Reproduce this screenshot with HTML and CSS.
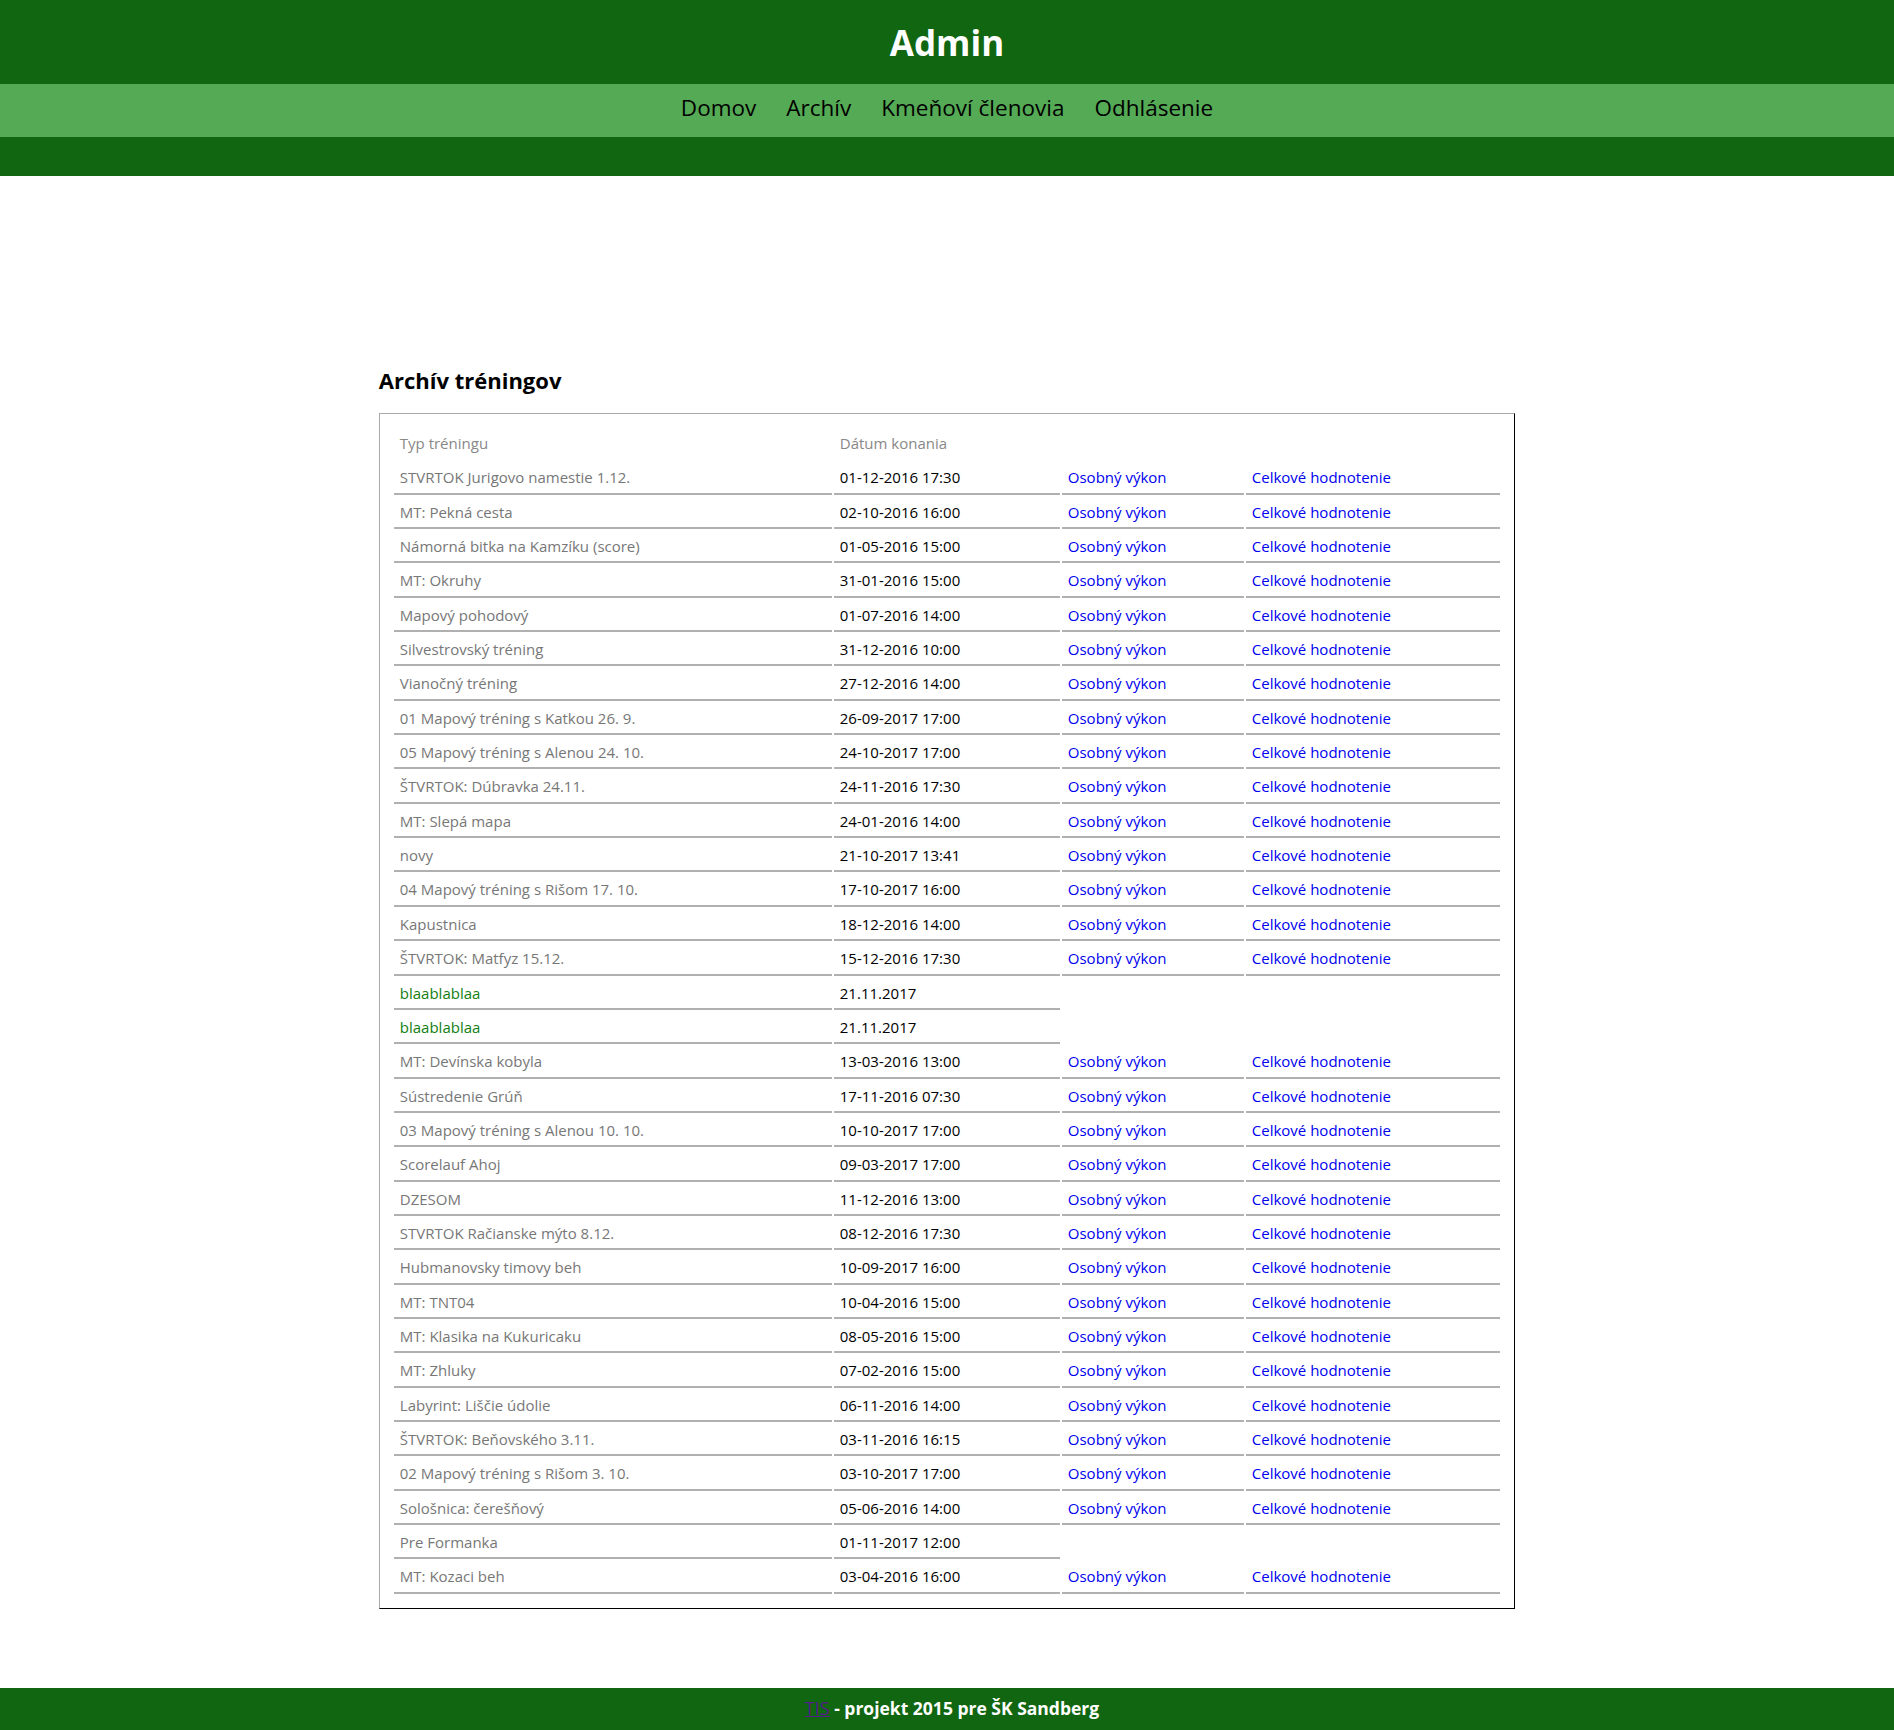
FILE: index.html
```html
<!DOCTYPE html>
<html lang="sk">
<head>
<meta charset="utf-8">
<title>Admin - Archív tréningov</title>
<link rel="stylesheet" href="styles.css">
</head>
<body>
<div class="page">
  <header class="site-header">
    <div class="title-bar"><h1 class="site-title">Admin</h1></div>
    <nav class="main-nav">
      <a class="nav-link" href="#">Domov</a>
      <a class="nav-link" href="#">Archív</a>
      <a class="nav-link" href="#">Kmeňoví členovia</a>
      <a class="nav-link" href="#">Odhlásenie</a>
    </nav>
    <div class="header-bottom"></div>
  </header>

  <main class="content">
    <h2 class="section-title">Archív tréningov</h2>
    <div class="archive-box">
      <table class="archive-table">
        <colgroup>
          <col class="col-type">
          <col class="col-date">
          <col class="col-personal">
          <col class="col-overall">
        </colgroup>
        <thead>
          <tr><th>Typ tréningu</th><th>Dátum konania</th><th></th><th></th></tr>
        </thead>
        <tbody>
          <tr><td class="type">STVRTOK Jurigovo namestie 1.12.</td><td class="date">01-12-2016 17:30</td><td><a href="#">Osobný výkon</a></td><td><a href="#">Celkové hodnotenie</a></td></tr>
          <tr><td class="type">MT: Pekná cesta</td><td class="date">02-10-2016 16:00</td><td><a href="#">Osobný výkon</a></td><td><a href="#">Celkové hodnotenie</a></td></tr>
          <tr><td class="type">Námorná bitka na Kamzíku (score)</td><td class="date">01-05-2016 15:00</td><td><a href="#">Osobný výkon</a></td><td><a href="#">Celkové hodnotenie</a></td></tr>
          <tr><td class="type">MT: Okruhy</td><td class="date">31-01-2016 15:00</td><td><a href="#">Osobný výkon</a></td><td><a href="#">Celkové hodnotenie</a></td></tr>
          <tr><td class="type">Mapový pohodový</td><td class="date">01-07-2016 14:00</td><td><a href="#">Osobný výkon</a></td><td><a href="#">Celkové hodnotenie</a></td></tr>
          <tr><td class="type">Silvestrovský tréning</td><td class="date">31-12-2016 10:00</td><td><a href="#">Osobný výkon</a></td><td><a href="#">Celkové hodnotenie</a></td></tr>
          <tr><td class="type">Vianočný tréning</td><td class="date">27-12-2016 14:00</td><td><a href="#">Osobný výkon</a></td><td><a href="#">Celkové hodnotenie</a></td></tr>
          <tr><td class="type">01 Mapový tréning s Katkou 26. 9.</td><td class="date">26-09-2017 17:00</td><td><a href="#">Osobný výkon</a></td><td><a href="#">Celkové hodnotenie</a></td></tr>
          <tr><td class="type">05 Mapový tréning s Alenou 24. 10.</td><td class="date">24-10-2017 17:00</td><td><a href="#">Osobný výkon</a></td><td><a href="#">Celkové hodnotenie</a></td></tr>
          <tr><td class="type">ŠTVRTOK: Dúbravka 24.11.</td><td class="date">24-11-2016 17:30</td><td><a href="#">Osobný výkon</a></td><td><a href="#">Celkové hodnotenie</a></td></tr>
          <tr><td class="type">MT: Slepá mapa</td><td class="date">24-01-2016 14:00</td><td><a href="#">Osobný výkon</a></td><td><a href="#">Celkové hodnotenie</a></td></tr>
          <tr><td class="type">novy</td><td class="date">21-10-2017 13:41</td><td><a href="#">Osobný výkon</a></td><td><a href="#">Celkové hodnotenie</a></td></tr>
          <tr><td class="type">04 Mapový tréning s Rišom 17. 10.</td><td class="date">17-10-2017 16:00</td><td><a href="#">Osobný výkon</a></td><td><a href="#">Celkové hodnotenie</a></td></tr>
          <tr><td class="type">Kapustnica</td><td class="date">18-12-2016 14:00</td><td><a href="#">Osobný výkon</a></td><td><a href="#">Celkové hodnotenie</a></td></tr>
          <tr><td class="type">ŠTVRTOK: Matfyz 15.12.</td><td class="date">15-12-2016 17:30</td><td><a href="#">Osobný výkon</a></td><td><a href="#">Celkové hodnotenie</a></td></tr>
          <tr><td class="type type-new">blaablablaa</td><td class="date">21.11.2017</td></tr>
          <tr><td class="type type-new">blaablablaa</td><td class="date">21.11.2017</td></tr>
          <tr><td class="type">MT: Devínska kobyla</td><td class="date">13-03-2016 13:00</td><td><a href="#">Osobný výkon</a></td><td><a href="#">Celkové hodnotenie</a></td></tr>
          <tr><td class="type">Sústredenie Grúň</td><td class="date">17-11-2016 07:30</td><td><a href="#">Osobný výkon</a></td><td><a href="#">Celkové hodnotenie</a></td></tr>
          <tr><td class="type">03 Mapový tréning s Alenou 10. 10.</td><td class="date">10-10-2017 17:00</td><td><a href="#">Osobný výkon</a></td><td><a href="#">Celkové hodnotenie</a></td></tr>
          <tr><td class="type">Scorelauf Ahoj</td><td class="date">09-03-2017 17:00</td><td><a href="#">Osobný výkon</a></td><td><a href="#">Celkové hodnotenie</a></td></tr>
          <tr><td class="type">DZESOM</td><td class="date">11-12-2016 13:00</td><td><a href="#">Osobný výkon</a></td><td><a href="#">Celkové hodnotenie</a></td></tr>
          <tr><td class="type">STVRTOK Račianske mýto 8.12.</td><td class="date">08-12-2016 17:30</td><td><a href="#">Osobný výkon</a></td><td><a href="#">Celkové hodnotenie</a></td></tr>
          <tr><td class="type">Hubmanovsky timovy beh</td><td class="date">10-09-2017 16:00</td><td><a href="#">Osobný výkon</a></td><td><a href="#">Celkové hodnotenie</a></td></tr>
          <tr><td class="type">MT: TNT04</td><td class="date">10-04-2016 15:00</td><td><a href="#">Osobný výkon</a></td><td><a href="#">Celkové hodnotenie</a></td></tr>
          <tr><td class="type">MT: Klasika na Kukuricaku</td><td class="date">08-05-2016 15:00</td><td><a href="#">Osobný výkon</a></td><td><a href="#">Celkové hodnotenie</a></td></tr>
          <tr><td class="type">MT: Zhluky</td><td class="date">07-02-2016 15:00</td><td><a href="#">Osobný výkon</a></td><td><a href="#">Celkové hodnotenie</a></td></tr>
          <tr><td class="type">Labyrint: Liščie údolie</td><td class="date">06-11-2016 14:00</td><td><a href="#">Osobný výkon</a></td><td><a href="#">Celkové hodnotenie</a></td></tr>
          <tr><td class="type">ŠTVRTOK: Beňovského 3.11.</td><td class="date">03-11-2016 16:15</td><td><a href="#">Osobný výkon</a></td><td><a href="#">Celkové hodnotenie</a></td></tr>
          <tr><td class="type">02 Mapový tréning s Rišom 3. 10.</td><td class="date">03-10-2017 17:00</td><td><a href="#">Osobný výkon</a></td><td><a href="#">Celkové hodnotenie</a></td></tr>
          <tr><td class="type">Sološnica: čerešňový</td><td class="date">05-06-2016 14:00</td><td><a href="#">Osobný výkon</a></td><td><a href="#">Celkové hodnotenie</a></td></tr>
          <tr><td class="type">Pre Formanka</td><td class="date">01-11-2017 12:00</td></tr>
          <tr><td class="type">MT: Kozaci beh</td><td class="date">03-04-2016 16:00</td><td><a href="#">Osobný výkon</a></td><td><a href="#">Celkové hodnotenie</a></td></tr>
        </tbody>
      </table>
    </div>
  </main>

  <footer class="site-footer">
    <p class="footer-text"><a class="footer-link" href="#">TIS</a> - projekt 2015 pre ŠK Sandberg</p>
  </footer>
</div>
</body>
</html>
```

FILE: styles.css
```css
html, body {
  margin: 0;
  padding: 0;
  background: #ffffff;
}

body {
  font-family: "Open Sans", "Noto Sans", sans-serif;
  font-size: 15px;
  color: #000;
}

.page {
  min-height: 1730px;
  display: flex;
  flex-direction: column;
}

/* Header */
.site-header {
  background: #116611;
}

.title-bar {
  height: 84px;
  display: flex;
  align-items: center;
  justify-content: center;
  padding-top: 2px;
  box-sizing: border-box;
}

.site-title {
  margin: 0;
  font-size: 35px;
  line-height: 48px;
  font-weight: 700;
  color: #ffffff;
}

.main-nav {
  height: 53px;
  background: #55aa55;
  display: flex;
  justify-content: center;
  align-items: center;
  gap: 30px;
  padding-bottom: 5px;
  box-sizing: border-box;
}

.nav-link {
  font-size: 22.5px;
  line-height: 30px;
  color: #000;
  text-decoration: none;
}

.header-bottom {
  height: 39px;
}

/* Content */
.content {
  width: 60%;
  margin: 0 auto;
  flex: 1;
}

.section-title {
  margin: 189px 0 18px;
  font-size: 22px;
  line-height: 30px;
  font-weight: 700;
}

.archive-box {
  border: 1px solid #aaaaaa;
  border-right-color: #000;
  border-bottom-color: #000;
  padding: 12px;
}

.archive-table {
  width: 100%;
  table-layout: fixed;
  border-collapse: separate;
  border-spacing: 2px;
}

.col-type { width: 438px; }
.col-date { width: 226px; }
.col-personal { width: 182px; }

.archive-table th,
.archive-table td {
  padding: 5px 6px;
  line-height: 20.35px;
  text-align: left;
  white-space: nowrap;
  border-bottom: 2px solid #b0b0b0;
}

.archive-table th {
  font-weight: 400;
  color: #888888;
  border-bottom-color: transparent;
}

.archive-table td.type {
  color: #777777;
}

.archive-table td.type-new {
  color: #128012;
}

.archive-table td.date {
  color: #000;
}

.archive-table a {
  color: #0000ee;
  text-decoration: none;
}

/* Footer */
.site-footer {
  margin-top: 79px;
  height: 42px;
  background: #116611;
  color: #ffffff;
}

.footer-text {
  margin: 0;
  padding-left: 10px;
  font-weight: 700;
  font-size: 17.5px;
  line-height: 40px;
  text-align: center;
}

.footer-link {
  color: #551a8b;
  font-weight: 400;
  font-size: 18px;
  text-decoration: underline;
}
```
